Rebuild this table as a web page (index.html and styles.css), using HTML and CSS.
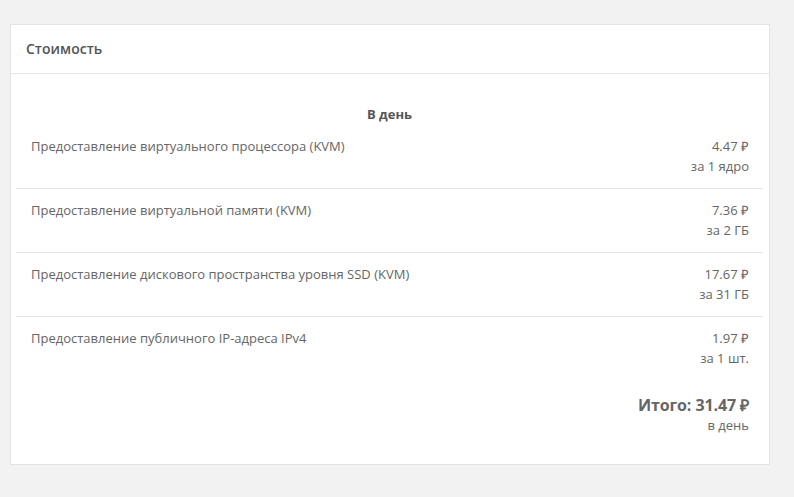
FILE: index.html
```html
<!DOCTYPE html>
<html lang="ru">
<head>
<meta charset="utf-8">
<link rel="stylesheet" href="styles.css">
</head>
<body>
<div class="page">
  <div class="card">
    <div class="card-header">Стоимость</div>
    <div class="card-body">
      <div class="period">В день</div>
      <div class="rows">
        <div class="row">
          <div class="name">Предоставление виртуального процессора (KVM)</div>
          <div class="price"><div>4.47 ₽</div><div>за 1 ядро</div></div>
        </div>
        <div class="row">
          <div class="name">Предоставление виртуальной памяти (KVM)</div>
          <div class="price"><div>7.36 ₽</div><div>за 2 ГБ</div></div>
        </div>
        <div class="row">
          <div class="name">Предоставление дискового пространства уровня SSD (KVM)</div>
          <div class="price"><div>17.67 ₽</div><div>за 31 ГБ</div></div>
        </div>
        <div class="row">
          <div class="name">Предоставление публичного IP-адреса IPv4</div>
          <div class="price"><div>1.97 ₽</div><div>за 1 шт.</div></div>
        </div>
      </div>
      <div class="total">
        <div class="total-sum">Итого: 31.47 ₽</div>
        <div class="total-per">в день</div>
      </div>
    </div>
  </div>
</div>
</body>
</html>
```
FILE: styles.css
```css
html, body {
  margin: 0;
  padding: 0;
  background: #f2f2f2;
  font-family: "Open Sans", "Liberation Sans", sans-serif;
  color: #666;
}
.page {
  padding: 24px 24px 32px 10px;
}
.card {
  width: 758px;
  background: #fff;
  border: 1px solid #e3e3e3;
}
.card-header {
  height: 48px;
  line-height: 48px;
  padding-left: 15px;
  font-size: 14px;
  font-weight: 600;
  color: #555;
  border-bottom: 1px solid #e3e3e3;
}
.card-body {
  padding: 30px 6px 29px 5px;
}
.period {
  text-align: center;
  font-weight: 700;
  font-size: 13px;
  line-height: 20px;
  color: #555;
}
.row {
  display: flex;
  justify-content: space-between;
  padding: 11px 14px 12px 15px;
  font-size: 13px;
  line-height: 20px;
  border-bottom: 1px solid #e3e3e3;
}
.row:first-child {
  padding-top: 12px;
}
.row:last-child {
  border-bottom: none;
  padding-bottom: 12px;
}
.price {
  text-align: right;
}
.total {
  text-align: right;
  padding: 14px 14px 0 0;
}
.total-sum {
  font-size: 16px;
  font-weight: 700;
  line-height: 22px;
  color: #666;
  letter-spacing: -0.1px;
}
.total-per {
  font-size: 13px;
  line-height: 19px;
}
```
